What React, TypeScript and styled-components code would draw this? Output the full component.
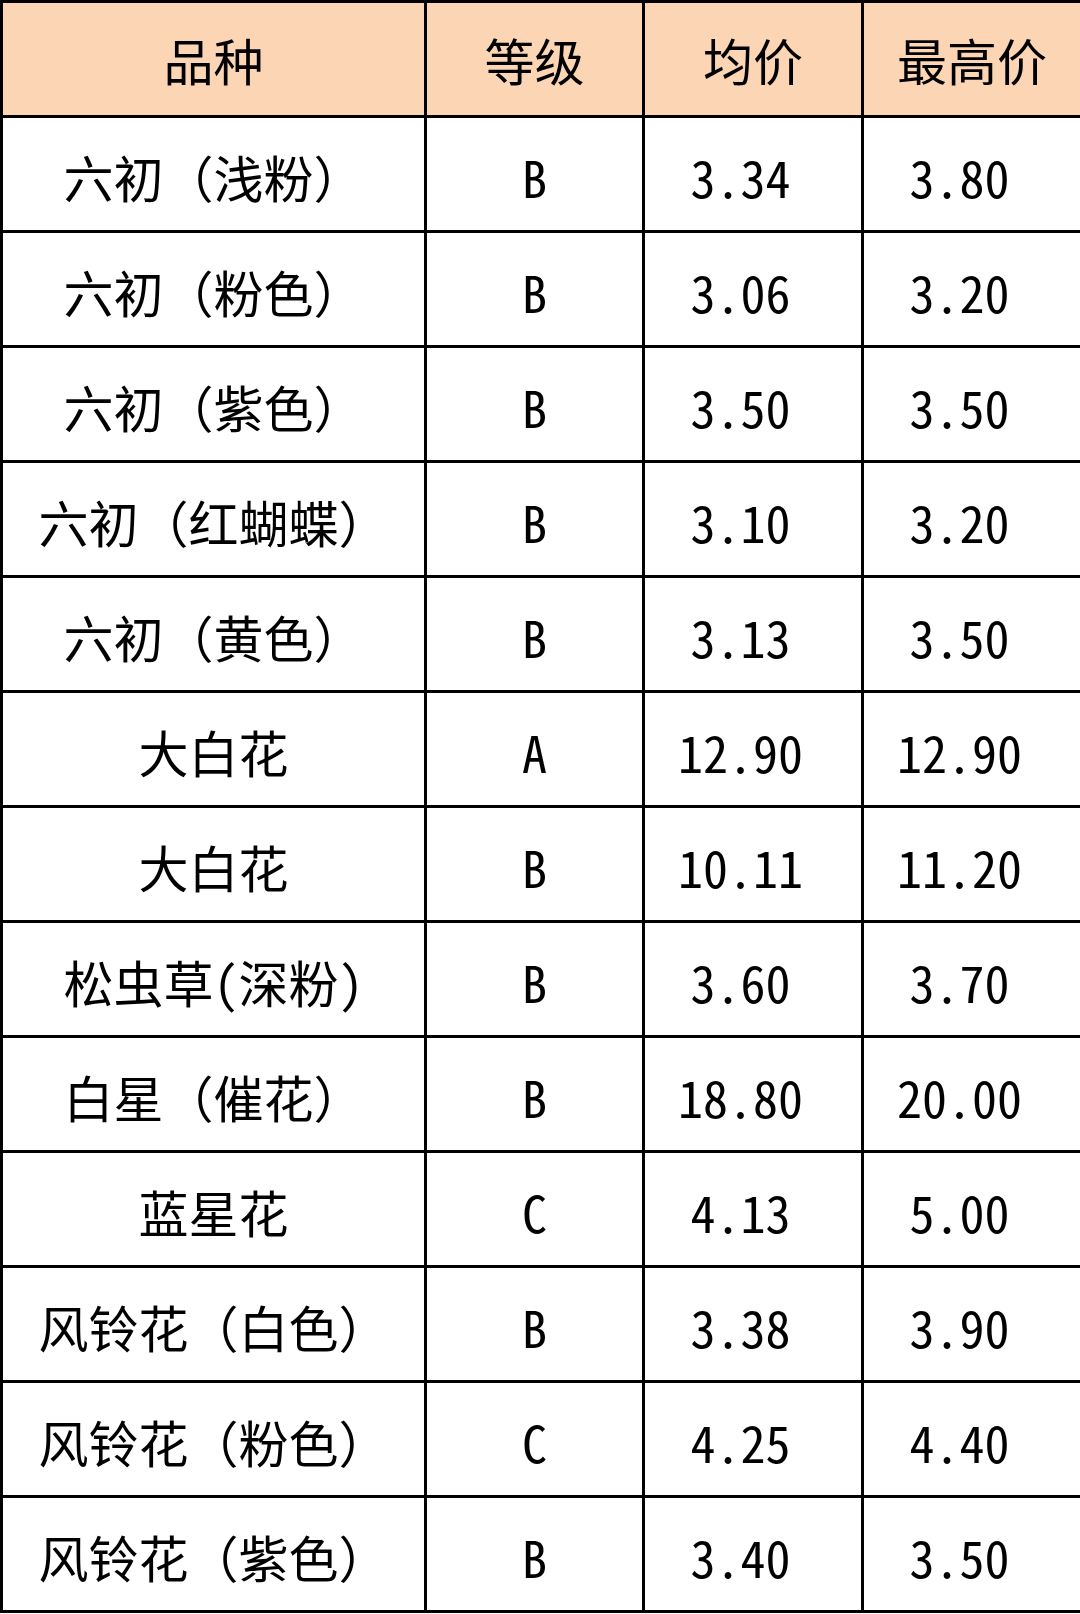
import styled, { createGlobalStyle } from "styled-components";

const GlobalStyle = createGlobalStyle`
  html, body {
    margin: 0;
    padding: 0;
    background: #fff;
  }
`;

const Table = styled.table`
  width: 1080px;
  table-layout: fixed;
  border-collapse: collapse;
  font-family: "Noto Sans Mono CJK SC", "Noto Sans CJK SC", sans-serif;
  font-size: 50px;
  color: #000;
`;

const Row = styled.tr`
  height: 115px;
`;

const Th = styled.th`
  background: #fcd5b4;
  border: 3px solid #000;
  font-weight: normal;
  text-align: center;
  vertical-align: middle;
  padding: 0;
`;

const Td = styled.td<{ $trail?: boolean }>`
  border: 3px solid #000;
  text-align: center;
  vertical-align: middle;
  padding: 4px ${(p) => (p.$trail ? "25px" : "0")} 0 0;
  white-space: nowrap;
`;

interface PriceRow {
  name: string;
  grade: string;
  avg: string;
  max: string;
}

const rows: PriceRow[] = [
  { name: "六初（浅粉）", grade: "B", avg: "3.34", max: "3.80" },
  { name: "六初（粉色）", grade: "B", avg: "3.06", max: "3.20" },
  { name: "六初（紫色）", grade: "B", avg: "3.50", max: "3.50" },
  { name: "六初（红蝴蝶）", grade: "B", avg: "3.10", max: "3.20" },
  { name: "六初（黄色）", grade: "B", avg: "3.13", max: "3.50" },
  { name: "大白花", grade: "A", avg: "12.90", max: "12.90" },
  { name: "大白花", grade: "B", avg: "10.11", max: "11.20" },
  { name: "松虫草(深粉)", grade: "B", avg: "3.60", max: "3.70" },
  { name: "白星（催花）", grade: "B", avg: "18.80", max: "20.00" },
  { name: "蓝星花", grade: "C", avg: "4.13", max: "5.00" },
  { name: "风铃花（白色）", grade: "B", avg: "3.38", max: "3.90" },
  { name: "风铃花（粉色）", grade: "C", avg: "4.25", max: "4.40" },
  { name: "风铃花（紫色）", grade: "B", avg: "3.40", max: "3.50" },
];

const App = () => {
  return (
    <>
      <GlobalStyle />
      <Table>
        <colgroup>
          <col style={{ width: 424 }} />
          <col style={{ width: 218 }} />
          <col style={{ width: 219 }} />
          <col style={{ width: 219 }} />
        </colgroup>
        <thead>
          <Row>
            <Th>品种</Th>
            <Th>等级</Th>
            <Th>均价</Th>
            <Th>最高价</Th>
          </Row>
        </thead>
        <tbody>
          {rows.map((row, i) => (
            <Row key={i}>
              <Td>{row.name}</Td>
              <Td>{row.grade}</Td>
              <Td $trail>{row.avg}</Td>
              <Td $trail>{row.max}</Td>
            </Row>
          ))}
        </tbody>
      </Table>
    </>
  );
};

export default App;
